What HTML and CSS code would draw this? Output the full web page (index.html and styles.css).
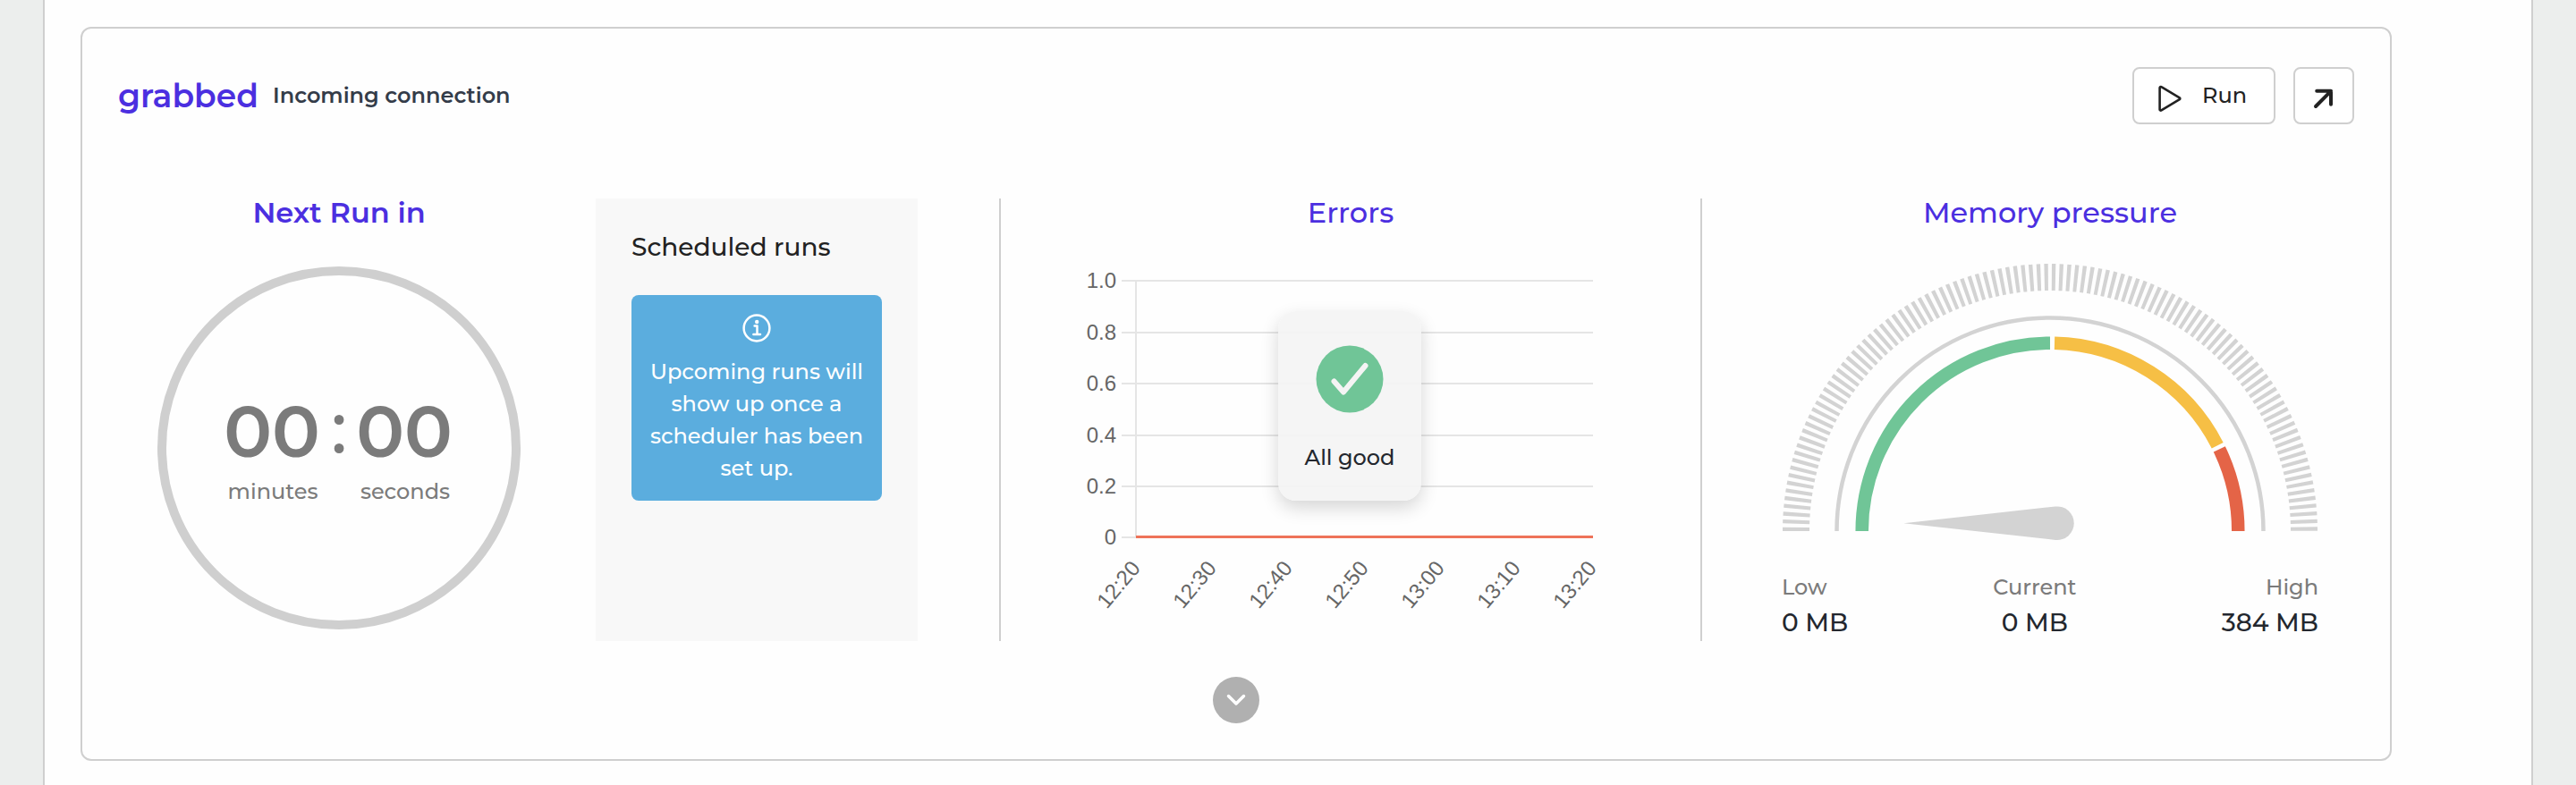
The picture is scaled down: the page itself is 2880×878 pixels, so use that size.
FILE: index.html
```
<!DOCTYPE html>
<html lang="en">

<head>
  <meta charset="utf-8">
  <meta name="viewport" content="width=device-width, initial-scale=1">
  <title>grabbed</title>
  <link rel="stylesheet" href="styles.css">
</head>

<body>
  <div class="page">
    <div class="card">
      <div class="header">
        <h2 class="name">grabbed</h2>
        <p class="description">Incoming connection</p>
        <button type="button" class="btn btn-run">
          <svg width="26" height="32" viewBox="0 0 26 32">
            <path d="M1.6 4.2v24.2c0 1 1 1.5 1.8 1l20.4-12.2c.7-.5.7-1.5 0-1.9L3.4 3.2c-.8-.5-1.8 0-1.8 1z" />
          </svg>
          <span class="btn-label">Run</span>
        </button>
        <button type="button" class="btn btn-open">
          <svg width="24" height="24" viewBox="0 0 24 24">
            <path d="M4.2 3.8H20v15M20 3.8L3 21" />
          </svg>
        </button>
      </div>

      <div class="panels">
        <div class="timer">
          <h3 class="next">Next Run in</h3>
          <div class="clock">
            <div class="unit">
              <span class="digits">00</span>
              <span class="label">minutes</span>
            </div>
            <span class="colon">:</span>
            <div class="unit">
              <span class="digits">00</span>
              <span class="label">seconds</span>
            </div>
          </div>
        </div>

        <div class="schedule">
          <h4>Scheduled runs</h4>
          <div class="info">
            <svg width="34" height="34" viewBox="0 0 34 34">
              <circle cx="17" cy="17" r="14.4" />
              <path d="M14.6 14.6h2.9v9M13.4 24h7.6" />
              <circle class="dot" cx="17.2" cy="10" r="2.2" />
            </svg>
            <p>Upcoming runs will<br>show up once a<br>scheduler has been<br>set up.</p>
          </div>
        </div>

        <div class="errors">
          <h3>Errors</h3>
          <svg class="chart" width="660" height="420" viewBox="1180 280 660 420">
            <path class="grid" d="M1254 314h527M1254 372h527M1254 429h527M1254 487h527M1254 544h527M1254 601h527M1270 314v287" />
            <path class="line" d="M1270 600.5h511" />
            <g class="ticks">
              <text x="1248" y="322">1.0</text>
              <text x="1248" y="379.5">0.8</text>
              <text x="1248" y="437">0.6</text>
              <text x="1248" y="494.5">0.4</text>
              <text x="1248" y="552">0.2</text>
              <text x="1248" y="609">0</text>
              <text transform="translate(1276 636) rotate(-50)">12:20</text>
              <text transform="translate(1361 636) rotate(-50)">12:30</text>
              <text transform="translate(1446 636) rotate(-50)">12:40</text>
              <text transform="translate(1531 636) rotate(-50)">12:50</text>
              <text transform="translate(1616 636) rotate(-50)">13:00</text>
              <text transform="translate(1701 636) rotate(-50)">13:10</text>
              <text transform="translate(1786 636) rotate(-50)">13:20</text>
            </g>
          </svg>
          <div class="all-good">
            <svg width="76" height="76" viewBox="0 0 76 76">
              <circle cx="38" cy="38" r="37.5" />
              <path d="M20.5 40.5L31 52.5L55.5 23" />
            </svg>
            <p>All good</p>
          </div>
        </div>

        <div class="memory">
          <h3>Memory pressure</h3>
          <svg class="gauge" width="600" height="312" viewBox="1992 294 600 312">
            <path class="scale" d="M2008 594a284 284 0 0 1 568 0" />
            <path class="rim" d="M2053.5 594a238.5 238.5 0 0 1 477 0" />
            <path class="low" d="M2081.7 594a210.3 210.3 0 0 1 210.3-210.3" />
            <path class="mid" d="M2297 383.76a210.3 210.3 0 0 1 182.2 114.44" />
            <path class="high" d="M2481.3 502.4a210.3 210.3 0 0 1 21 91.6" />
            <path class="needle" d="M2128.4 585.3L2298 566.5a18.8 18.8 0 1 1 0 37.4z" />
          </svg>
          <div class="stats">
            <div>
              <p class="label">Low</p>
              <p class="value">0 MB</p>
            </div>
            <div class="current">
              <p class="label">Current</p>
              <p class="value">0 MB</p>
            </div>
            <div class="right">
              <p class="label">High</p>
              <p class="value">384 MB</p>
            </div>
          </div>
        </div>
      </div>

      <button type="button" class="expand">
        <svg width="24" height="16" viewBox="0 0 24 16">
          <path d="M3.5 3.5l8.5 8.5l8.5-8.5" />
        </svg>
      </button>
    </div>
  </div>
</body>

</html>
```
FILE: styles.css
```
* {
  margin: 0;
  padding: 0;
  box-sizing: border-box;
}

body {
  font-family: 'Montserrat', 'Inter', sans-serif;
  font-size: 24px;
  font-weight: 500;
  color: #23272e;
  background-color: #eceeed;
  overflow: hidden;
}

svg {
  display: block;
  fill: none;
  stroke-linecap: round;
  stroke-linejoin: round;
}

.page {
  height: 878px;
  margin: 0 48px;
  padding: 30px 0 0 40px;
  background-color: #fefefe;
  border-left: 2px solid #cfcfcf;
  border-right: 2px solid #cfcfcf;
}

.card {
  width: 2584px;
  height: 821px;
  padding: 43px 40px 0;
  border: 2px solid #cfcfcf;
  border-radius: 12px;
}

.header {
  display: flex;
  height: 64px;
}

.name {
  width: 173px;
  font-size: 36px;
  font-weight: 600;
  line-height: 64px;
  color: #4b2fe0;
}

.description {
  flex: 1;
  font-weight: 600;
  line-height: 64px;
  color: #343c49;
}

.btn {
  display: flex;
  align-items: center;
  background-color: #fff;
  border: 2px solid #cfcfcf;
  border-radius: 8px;
  font: inherit;
  color: #222;
}

.btn svg {
  stroke: #222;
  stroke-width: 2.6;
}

.btn-run {
  width: 160px;
  padding: 6px 0 0 27px;
}

.btn-label {
  margin: -7px 0 0 23px;
}

.btn-open {
  width: 68px;
  margin-left: 20px;
  padding: 5px 0 0 20px;
}

.btn-open svg {
  stroke-width: 4;
}

.panels {
  display: flex;
  height: 495px;
  margin-top: 83px;
}

h3 {
  height: 32px;
  font-size: 32px;
  font-weight: 500;
  line-height: 31px;
  text-align: center;
  color: #4b2fe0;
}

.timer {
  width: 494px;
}

.timer .next {
  font-weight: 600;
}

.clock {
  display: flex;
  justify-content: center;
  width: 406px;
  height: 406px;
  margin: 44px auto 0;
  padding-top: 135px;
  border: 10px solid #cfcfcf;
  border-radius: 50%;
  color: #7b7b7b;
}

.unit {
  display: flex;
  flex-direction: column;
  align-items: center;
  width: 108px;
}

.digits {
  margin-right: 2px;
  font-size: 80px;
  font-weight: 600;
  line-height: 80px;
}

.colon {
  width: 40px;
  font-size: 80px;
  line-height: 72px;
  text-align: center;
}

.label {
  color: #7b7b7b;
  line-height: 30px;
}

.unit .label {
  margin-top: 12px;
}

.schedule {
  width: 360px;
  margin-left: 40px;
  padding: 40px;
  background-color: #f8f8f8;
}

h4 {
  font-size: 28px;
  font-weight: 500;
  line-height: 28px;
  white-space: nowrap;
  color: #222;
}

.info {
  height: 230px;
  margin-top: 40px;
  padding-top: 20px;
  background-color: #5badde;
  border-radius: 8px;
  text-align: center;
  line-height: 36px;
  white-space: nowrap;
  color: #fff;
}

.info svg {
  margin: 0 auto 14px;
  stroke: #fff;
  stroke-width: 2.5;
}

.info .dot {
  fill: #fff;
  stroke: none;
}

.errors {
  position: relative;
  width: 786px;
  margin-left: 91px;
  border-left: 2px solid #cfcfcf;
  border-right: 2px solid #cfcfcf;
}

.chart {
  margin: 26px 0 0 61px;
}

.grid {
  stroke: #e5e5e5;
  stroke-width: 2;
  stroke-linecap: butt;
}

.line {
  stroke: #ee7359;
  stroke-width: 3;
  stroke-linecap: butt;
}

.ticks {
  font-family: 'Liberation Sans', Arial, sans-serif;
  font-size: 24px;
  font-weight: 400;
  fill: #666;
  text-anchor: end;
}

.all-good {
  position: absolute;
  top: 126px;
  left: 310px;
  width: 160px;
  height: 212px;
  padding-top: 38px;
  background-color: rgba(244, 244, 244, 0.92);
  border-radius: 20px;
  box-shadow: 0 8px 20px rgba(0, 0, 0, 0.16);
  text-align: center;
}

.all-good svg {
  margin: 0 auto 35px;
}

.all-good circle {
  fill: #70c597;
}

.all-good path {
  stroke: #f4f4f4;
  stroke-width: 6;
}

.memory {
  width: 600px;
  margin-left: 89px;
}

.gauge {
  margin-top: 40px;
  stroke-linecap: butt;
}

.scale {
  stroke: #d3d3d3;
  stroke-width: 30;
  stroke-dasharray: 4.2 4.093;
}

.rim {
  stroke: #d3d3d3;
  stroke-width: 4.5;
}

.low,
.mid,
.high {
  stroke: #70c597;
  stroke-width: 14.5;
}

.mid {
  stroke: #f6bf45;
}

.high {
  stroke: #e46447;
}

.needle {
  fill: #d3d3d3;
}

.stats {
  display: flex;
  justify-content: space-between;
  margin-top: 36px;
}

.value {
  font-size: 28px;
  line-height: 36px;
  margin-top: 6px;
}

.current {
  text-align: center;
}

.right {
  text-align: right;
}

.expand {
  display: flex;
  align-items: center;
  justify-content: center;
  width: 52px;
  height: 52px;
  margin: 40px auto 0;
  background-color: #b0b0b0;
  border: 0;
  border-radius: 50%;
}

.expand svg {
  stroke: #fff;
  stroke-width: 3.5;
}
```
